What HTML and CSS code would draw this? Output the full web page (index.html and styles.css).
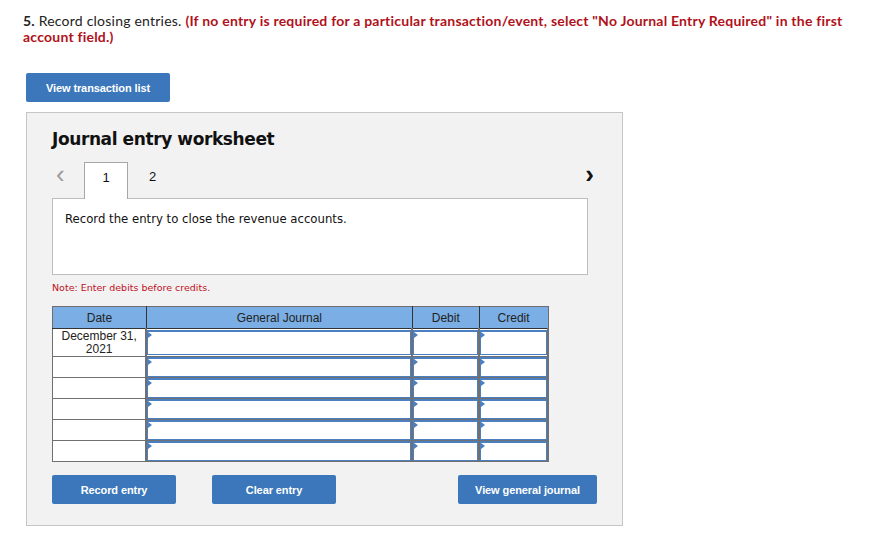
FILE: index.html
```html
<!DOCTYPE html>
<html>
<head>
  <meta charset="utf-8" />
  <title>Journal entry worksheet</title>
  <link rel="stylesheet" href="styles.css">
</head>
<body>
  <div class="page">
    <p class="question"><b>5.</b> Record closing entries. <span class="hint">(If no entry is required for a particular transaction/event, select "No Journal Entry Required" in the first account field.)</span></p>

    <button class="btn btn-list">View transaction list</button>

    <div class="worksheet">
      <h2>Journal entry worksheet</h2>

      <div class="tabs">
        <span class="arrow prev">&lsaquo;</span>
        <span class="tab active">1</span>
        <span class="tab">2</span>
        <span class="arrow next">&rsaquo;</span>
      </div>

      <div class="task">Record the entry to close the revenue accounts.</div>

      <p class="note">Note: Enter debits before credits.</p>

      <table class="journal">
        <thead>
          <tr>
            <th class="col-date">Date</th>
            <th class="col-account">General Journal</th>
            <th class="col-debit">Debit</th>
            <th class="col-credit">Credit</th>
          </tr>
        </thead>
        <tbody>
          <tr class="first">
            <td class="date">December 31,<br>2021</td>
            <td><div class="field"></div></td>
            <td><div class="field"></div></td>
            <td><div class="field"></div></td>
          </tr>
          <tr>
            <td class="date"></td>
            <td><div class="field"></div></td>
            <td><div class="field"></div></td>
            <td><div class="field"></div></td>
          </tr>
          <tr>
            <td class="date"></td>
            <td><div class="field"></div></td>
            <td><div class="field"></div></td>
            <td><div class="field"></div></td>
          </tr>
          <tr>
            <td class="date"></td>
            <td><div class="field"></div></td>
            <td><div class="field"></div></td>
            <td><div class="field"></div></td>
          </tr>
          <tr>
            <td class="date"></td>
            <td><div class="field"></div></td>
            <td><div class="field"></div></td>
            <td><div class="field"></div></td>
          </tr>
          <tr>
            <td class="date"></td>
            <td><div class="field"></div></td>
            <td><div class="field"></div></td>
            <td><div class="field"></div></td>
          </tr>
        </tbody>
      </table>

      <div class="actions">
        <div class="actions-left">
          <button class="btn btn-action">Record entry</button>
          <button class="btn btn-action">Clear entry</button>
        </div>
        <button class="btn btn-journal">View general journal</button>
      </div>
    </div>
  </div>
</body>
</html>
```

FILE: styles.css
```css
* {
  margin: 0;
  padding: 0;
  box-sizing: border-box;
}

body {
  font-family: Lato, "Liberation Sans", Arial, sans-serif;
  background: #fff;
  color: #222;
}

.page {
  padding: 13px 0 0 23px;
}

.question {
  font-size: 14px;
  letter-spacing: 0.22px;
  line-height: 16px;
  width: 845px;
  color: #222;
}

.question b {
  font-weight: 700;
}

.hint {
  color: #b0121b;
  font-weight: 700;
}

.btn {
  font-family: "Liberation Sans", Arial, sans-serif;
  font-weight: 700;
  font-size: 11px;
  color: #fff;
  background: #3b77ba;
  border: none;
  border-radius: 2px;
  height: 29px;
  letter-spacing: -0.1px;
  cursor: pointer;
}

.btn-list {
  margin: 28px 0 0 3px;
  width: 144px;
}

.worksheet {
  margin: 10px 0 0 3px;
  width: 597px;
  background: #f2f2f2;
  border: 1px solid #c6c6c6;
  padding: 15px 25px 21px 25px;
}

.worksheet h2 {
  font-family: "DejaVu Sans", Verdana, sans-serif;
  font-size: 17px;
  line-height: 22px;
  font-weight: 700;
  color: #111;
  letter-spacing: -0.4px;
}

.tabs {
  display: flex;
  align-items: stretch;
  height: 36px;
  margin-top: 12px;
  font-family: "Liberation Sans", Arial, sans-serif;
  font-size: 13px;
}

.arrow {
  display: flex;
  align-items: center;
  font-size: 26px;
  line-height: 1;
  padding-bottom: 12px;
}

.prev {
  color: #999;
  width: 32px;
  padding-left: 4px;
}

.next {
  margin-left: auto;
  color: #111;
  font-weight: 700;
  padding-right: 3px;
}

.tab {
  width: 44px;
  display: flex;
  align-items: center;
  justify-content: center;
  padding-bottom: 8px;
  color: #111;
}

.tab.active {
  background: #fff;
  border: 1px solid #a6a6a6;
  border-bottom: none;
  position: relative;
  z-index: 1;
  margin-bottom: -1px;
  height: 37px;
}

.tab + .tab {
  padding-left: 5px;
}

.task {
  width: 536px;
  height: 77px;
  background: #fff;
  border: 1px solid #bdbdbd;
  padding: 12px 12px;
  font-family: "DejaVu Sans", Verdana, sans-serif;
  font-size: 11.7px;
  line-height: 16px;
  color: #111;
}

.note {
  font-family: "DejaVu Sans", Verdana, sans-serif;
  font-size: 9.5px;
  color: #c0111e;
  margin-top: 7px;
  line-height: 12px;
}

.journal {
  margin-top: 12px;
  border-collapse: collapse;
  width: 497px;
  font-family: "Liberation Sans", Arial, sans-serif;
  font-size: 12px;
  color: #222;
  background: #fff;
}

.journal th {
  background: #7aaee4;
  font-weight: 400;
  height: 22px;
  border: 1px solid #333;
  border-top-color: #6d6d6d;
  text-align: center;
}

.journal th:first-child {
  border-left-color: #6d6d6d;
}

.journal th:last-child {
  border-right-color: #6d6d6d;
}

.col-date {
  width: 94px;
}

.col-account {
  width: 267px;
}

.col-debit {
  width: 67px;
}

.col-credit {
  width: 69px;
}

.journal td {
  border: 1px solid #707070;
  padding: 0;
  height: 21px;
}

.journal tr.first td {
  height: 27px;
}

.journal td.date {
  text-align: center;
  vertical-align: top;
  line-height: 13px;
  padding-top: 1px;
}

.journal td:not(.date) {
  border-width: 1px 2px;
}

.field {
  position: relative;
  height: 100%;
  min-height: 19px;
  border: 1px solid #4a7fc1;
  border-width: 2px 1px 1px 1px;
}

.journal tr.first .field {
  height: 25px;
}

.field::before {
  content: '';
  position: absolute;
  top: 0;
  left: 0;
  border-left: 4px solid #4a7fc1;
  border-top: 3px solid transparent;
  border-bottom: 3px solid transparent;
}

.actions {
  display: flex;
  justify-content: space-between;
  margin-top: 13px;
}

.actions-left {
  display: flex;
  gap: 36px;
}

.btn-action {
  width: 124px;
}

.btn-journal {
  width: 139px;
}
```
